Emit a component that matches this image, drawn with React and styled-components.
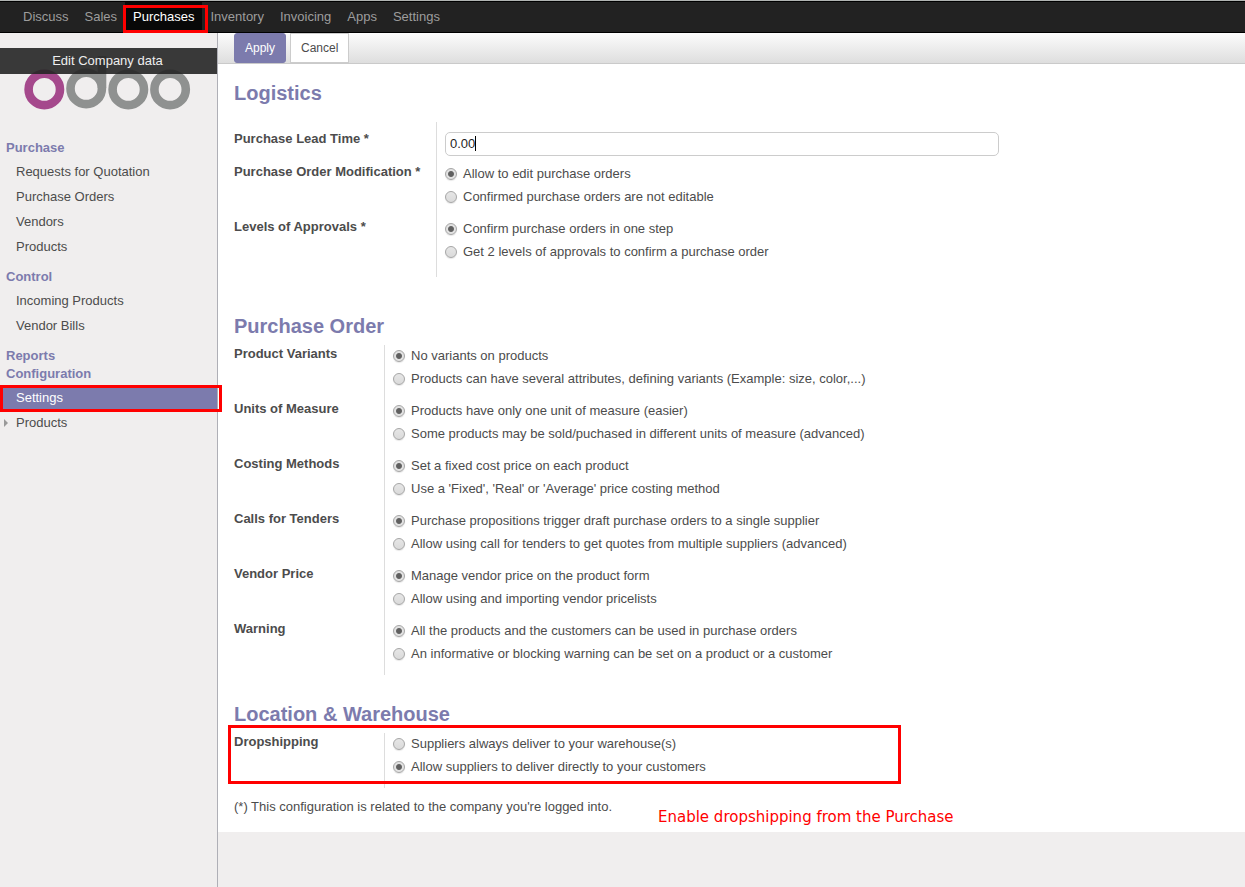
import React, { useState } from "react";
import styled, { createGlobalStyle, css } from "styled-components";

const PURPLE = "#7c7bad";
const INK = "#4c4c4c";
const RED = "#ff0000";

const GlobalStyle = createGlobalStyle`
  *, *::before, *::after { box-sizing: border-box; }
  body {
    margin: 0;
    background: #f0eeee;
    color: ${INK};
    font: 13px/18px "Liberation Sans", Arial, sans-serif;
  }
`;

const Page = styled.div`
  min-height: 100vh;
  display: flex;
  flex-direction: column;
`;

const callout = css`
  position: relative;
  &::after {
    content: "";
    position: absolute;
    border: 3px solid ${RED};
    pointer-events: none;
    z-index: 2;
  }
`;

const TopBar = styled.nav`
  display: flex;
  height: 33px;
  padding: 1px 15px 0;
  background: #222;
  border-top: 1px solid #b0b4b2;
  border-bottom: 1px solid #000;
  box-shadow: inset 0 1px 0 #000;
`;

const TopLink = styled.a`
  padding: 0 8px;
  line-height: 30px;
  color: ${(p) => (p.$active ? "#fff" : "#9d9d9d")};
  background: ${(p) => (p.$active ? "#080808" : "transparent")};
  text-decoration: none;
  ${(p) =>
    p.$active &&
    css`
      ${callout}
      &::after {
        inset: 3px -6px -1px -2px;
      }
    `}
`;

const Body = styled.div`
  flex: 1;
  display: flex;
`;

const Sidebar = styled.aside`
  flex: 0 0 218px;
  border-right: 1px solid #afafb6;
`;

const Brand = styled.div`
  position: relative;
  padding: 15px 0 0;
  margin-bottom: 27px;
`;

const Logo = styled.svg`
  display: block;
  width: 217px;
  height: 64px;
`;

const EditCompany = styled.button`
  position: absolute;
  top: 15px;
  left: 0;
  width: 100%;
  height: 26px;
  padding: 0 2px 0 0;
  border: 0;
  background: rgba(37, 37, 37, 0.9);
  color: #eee;
  font: inherit;
`;

const MenuHeading = styled.h2`
  margin: 0;
  padding-left: 6px;
  font-size: 13px;
  line-height: 18px;
  color: ${PURPLE};
`;

const MenuList = styled.ul`
  margin: 2px 0 9px;
  padding: 0;
  list-style: none;
`;

const MenuLink = styled.a`
  display: flex;
  align-items: center;
  height: 25px;
  padding-left: ${(p) => (p.$expandable ? "4px" : "16px")};
  gap: 8px;
  color: ${(p) => (p.$active ? "#fff" : INK)};
  background: ${(p) => (p.$active ? PURPLE : "transparent")};
  text-decoration: none;
  ${(p) =>
    p.$active &&
    css`
      ${callout}
      &::after {
        inset: 0 -5px -2px 0;
      }
    `}
`;

const Arrow = styled.svg`
  width: 4px;
  height: 8px;
  fill: #9a9a9a;
`;

const Main = styled.main`
  flex: 1;
  min-width: 0;
`;

const Toolbar = styled.div`
  display: flex;
  gap: 4px;
  height: 31px;
  padding-left: 16px;
  background: linear-gradient(to bottom, #fcfcfc, #dedede);
  border-bottom: 1px solid #cacaca;
`;

const Button = styled.button`
  height: 30px;
  padding: 0 10px;
  border: 1px solid ${(p) => (p.$primary ? PURPLE : "#ccc")};
  border-radius: ${(p) => (p.$primary ? "3px" : "0")};
  background: ${(p) => (p.$primary ? PURPLE : "#fff")};
  color: ${(p) => (p.$primary ? "#fff" : INK)};
  font: 12px/18px "Liberation Sans", Arial, sans-serif;
`;

const Sheet = styled.form`
  position: relative;
  padding: 17px 16px 16px;
  background: #fff;
`;

const SectionTitle = styled.h1`
  margin: 0 0 ${(p) => (p.$loose ? "17px" : "7px")};
  font-size: 20px;
  line-height: 24px;
  color: ${PURPLE};
`;

const Section = styled.section`
  margin-bottom: ${(p) => p.$after};
`;

const Group = styled.div`
  width: 77%;
`;

const Row = styled.div`
  display: grid;
  grid-template-columns: ${(p) => p.$labelWidth} 1fr;
  ${(p) =>
    p.$highlight &&
    css`
      ${callout}
      &::after {
        top: -8px;
        left: -6px;
        width: 673px;
        height: 59px;
      }
    `}
`;

const RowLabel = styled.label`
  padding-top: ${(p) => (p.$input ? "8px" : "0")};
  font-weight: bold;
`;

const Cell = styled.div`
  padding: ${(p) => (p.$input ? "10px 1px 7px 8px" : "0 0 9px 8px")};
  border-left: 1px solid #ddd;
`;

const GroupEnd = styled.div`
  height: 4px;
  margin-left: 202px;
  border-left: 1px solid #ddd;
`;

const InputWrap = styled.div`
  position: relative;
`;

const TextInput = styled.input`
  display: block;
  width: 100%;
  height: 24px;
  padding: 0 4px 2px;
  border: 1px solid #ccc;
  border-radius: 5px;
  background: #fff;
  color: #1f1f1f;
  font: inherit;
`;

const Caret = styled.span`
  position: absolute;
  top: 4px;
  left: 30px;
  width: 1px;
  height: 15px;
  background: #000;
`;

const Option = styled.label`
  display: flex;
  align-items: center;
  gap: 6px;
  height: 22px;
  margin-bottom: 1px;
`;

const Radio = styled.input`
  appearance: none;
  flex: none;
  width: 12px;
  height: 12px;
  margin: 0;
  border: 1px solid #a6a6a6;
  border-radius: 50%;
  background: linear-gradient(#e6e6e6, #dadada);
  box-shadow: 0 1px 1px rgba(0, 0, 0, 0.1);
  &:checked {
    background: radial-gradient(circle, #606060 0 2px, #666 2.5px, #e2e2e2 3.5px);
  }
`;

const Footnote = styled.p`
  margin: 0;
`;

const Note = styled.div`
  position: absolute;
  left: 440px;
  bottom: 5px;
  color: ${RED};
  font: 15px/19px "DejaVu Sans", sans-serif;
  white-space: nowrap;
`;

const apps = ["Discuss", "Sales", "Purchases", "Inventory", "Invoicing", "Apps", "Settings"];

const menu = [
  { title: "Purchase", items: ["Requests for Quotation", "Purchase Orders", "Vendors", "Products"] },
  { title: "Control", items: ["Incoming Products", "Vendor Bills"] },
  { title: "Reports", items: [] },
  { title: "Configuration", items: ["Settings", "Products"] },
];

const logistics = [
  { label: "Purchase Order Modification *", options: ["Allow to edit purchase orders", "Confirmed purchase orders are not editable"] },
  { label: "Levels of Approvals *", options: ["Confirm purchase orders in one step", "Get 2 levels of approvals to confirm a purchase order"] },
];

const purchaseOrder = [
  { label: "Product Variants", options: ["No variants on products", "Products can have several attributes, defining variants (Example: size, color,...)"] },
  { label: "Units of Measure", options: ["Products have only one unit of measure (easier)", "Some products may be sold/puchased in different units of measure (advanced)"] },
  { label: "Costing Methods", options: ["Set a fixed cost price on each product", "Use a 'Fixed', 'Real' or 'Average' price costing method"] },
  { label: "Calls for Tenders", options: ["Purchase propositions trigger draft purchase orders to a single supplier", "Allow using call for tenders to get quotes from multiple suppliers (advanced)"] },
  { label: "Vendor Price", options: ["Manage vendor price on the product form", "Allow using and importing vendor pricelists"] },
  { label: "Warning", options: ["All the products and the customers can be used in purchase orders", "An informative or blocking warning can be set on a product or a customer"] },
];

const dropshipping = {
  label: "Dropshipping",
  options: ["Suppliers always deliver to your warehouse(s)", "Allow suppliers to deliver directly to your customers"],
};

function RadioRow({ field, labelWidth = "150px", initial = 0, highlight }) {
  const [selected, setSelected] = useState(initial);
  const id = field.label.replace(/\W+/g, "-").toLowerCase();
  return (
    <Row $labelWidth={labelWidth} $highlight={highlight} role="radiogroup" aria-labelledby={id}>
      <RowLabel as="div" id={id}>{field.label}</RowLabel>
      <Cell>
        {field.options.map((text, i) => (
          <Option key={text}>
            <Radio type="radio" name={id} checked={selected === i} onChange={() => setSelected(i)} />
            {text}
          </Option>
        ))}
      </Cell>
    </Row>
  );
}

export default function App() {
  const [leadTime, setLeadTime] = useState("0.00");
  return (
    <Page>
      <GlobalStyle />
      <TopBar>
        {apps.map((name) => (
          <TopLink key={name} href="#" $active={name === "Purchases"}>{name}</TopLink>
        ))}
      </TopBar>
      <Body>
        <Sidebar>
          <Brand>
            <Logo viewBox="0 0 217 64" fill="none" strokeWidth="8.6" role="img" aria-label="odoo">
              <circle cx="44.3" cy="41.4" r="15.7" stroke="#a5498c" />
              <g stroke="#8f9190">
                <circle cx="86.2" cy="40.4" r="15.7" />
                <path d="M102 8V40" />
                <circle cx="128.3" cy="41.4" r="15.7" />
                <circle cx="170.1" cy="41.4" r="15.7" />
              </g>
            </Logo>
            <EditCompany type="button">Edit Company data</EditCompany>
          </Brand>
          {menu.map((group) => (
            <React.Fragment key={group.title}>
              <MenuHeading>{group.title}</MenuHeading>
              {group.items.length > 0 && (
                <MenuList>
                  {group.items.map((item) => {
                    const expandable = group.title === "Configuration" && item === "Products";
                    return (
                      <li key={item}>
                        <MenuLink href="#" $active={item === "Settings"} $expandable={expandable}>
                          {expandable && (
                            <Arrow viewBox="0 0 4 8"><path d="M0 0L4 4L0 8Z" /></Arrow>
                          )}
                          {item}
                        </MenuLink>
                      </li>
                    );
                  })}
                </MenuList>
              )}
            </React.Fragment>
          ))}
        </Sidebar>
        <Main>
          <Toolbar>
            <Button type="submit" form="settings" $primary>Apply</Button>
            <Button type="button">Cancel</Button>
          </Toolbar>
          <Sheet id="settings" onSubmit={(e) => e.preventDefault()}>
            <Section $after="37px">
              <SectionTitle $loose>Logistics</SectionTitle>
              <Group>
                <Row $labelWidth="202px">
                  <RowLabel $input htmlFor="lead-time">Purchase Lead Time *</RowLabel>
                  <Cell $input>
                    <InputWrap>
                      <TextInput id="lead-time" type="text" value={leadTime} onChange={(e) => setLeadTime(e.target.value)} />
                      <Caret />
                    </InputWrap>
                  </Cell>
                </Row>
                {logistics.map((f) => (
                  <RadioRow key={f.label} field={f} labelWidth="202px" />
                ))}
                <GroupEnd />
              </Group>
            </Section>
            <Section $after="27px">
              <SectionTitle>Purchase Order</SectionTitle>
              <Group>
                {purchaseOrder.map((f) => (
                  <RadioRow key={f.label} field={f} />
                ))}
              </Group>
            </Section>
            <Section $after="10px">
              <SectionTitle>Location &amp; Warehouse</SectionTitle>
              <Group>
                <RadioRow field={dropshipping} initial={1} highlight />
              </Group>
            </Section>
            <Footnote>(*) This configuration is related to the company you're logged into.</Footnote>
            <Note>Enable dropshipping from the Purchase</Note>
          </Sheet>
        </Main>
      </Body>
    </Page>
  );
}
